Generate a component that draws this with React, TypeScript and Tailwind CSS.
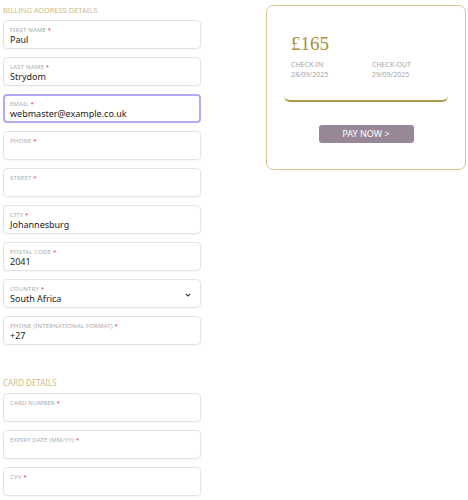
import React from "react";

type FieldProps = {
  label: string;
  value?: string;
  focused?: boolean;
  select?: boolean;
};

const Field: React.FC<FieldProps> = ({ label, value, focused, select }) => {
  return (
    <div
      className={
        focused
          ? "relative h-[29px] rounded-[4px] border-2 border-[#b8a6f7] bg-white px-[5px] pt-[4px]"
          : "relative h-[29px] rounded-[4px] border border-[#e4e4e4] bg-white px-[6px] pt-[5px] shadow-[0_1px_2px_rgba(0,0,0,0.04)]"
      }
    >
      <div className="text-[6px] leading-[8px] uppercase tracking-[0.03em] text-[#aaaaaa]">
        {label} <span className="text-[#e0245e]">*</span>
      </div>
      {value && <div className="text-[9px] leading-[12px] text-[#222]">{value}</div>}
      {select && (
        <svg className="absolute right-[9px] top-[13px]" width="6" height="4" viewBox="0 0 6 4">
          <path d="M0.8 0.8 L3 3 L5.2 0.8" fill="none" stroke="#333" strokeWidth="1.1" />
        </svg>
      )}
    </div>
  );
};

const App: React.FC = () => {
  return (
    <div
      className="flex w-[468px] h-[500px] bg-white overflow-hidden"
      style={{ fontFamily: '"Noto Sans", "Open Sans", sans-serif' }}
    >
      <div className="w-[198px] ml-[3px] flex flex-col">
        <h3 className="mt-[6px] text-[7.5px] leading-[9px] uppercase text-[#cdbb85]">Billing address details</h3>
        <div className="mt-[5px] flex flex-col gap-[8px]">
          <Field label="First name" value="Paul" />
          <Field label="Last name" value="Strydom" />
          <Field label="Email" value="webmaster@example.co.uk" focused />
          <Field label="Phone" />
          <Field label="Street" />
          <Field label="City" value="Johannesburg" />
          <Field label="Postal code" value="2041" />
          <Field label="Country" value="South Africa" select />
          <Field label="Phone (international format)" value="+27" />
        </div>
        <h3 className="mt-[33px] text-[8px] leading-[10px] uppercase text-[#cdbb85]">Card details</h3>
        <div className="mt-[5px] flex flex-col gap-[8px]">
          <Field label="Card number" />
          <Field label="Expiry date (MM/YY)" />
          <Field label="CVV" />
        </div>
      </div>
      <div className="ml-[65px] mt-[5px] w-[200px] h-[165px] rounded-[7px] border border-[#d6c78f] px-[17px] pt-[27px]">
        <div className="rounded-b-[6px] border-b-2 border-[#ab9a45] pb-[20px] px-[7px]">
          <div
            className="text-[19px] leading-[22px] text-[#a8913a]"
            style={{ fontFamily: '"Liberation Serif", serif' }}
          >
            £165
          </div>
          <div className="mt-[5px] grid grid-cols-2 text-[7px] leading-[10px] text-[#a5a5a5]">
            <div>
              <div className="uppercase">Check-in</div>
              <div>28/09/2025</div>
            </div>
            <div className="pl-[6px]">
              <div className="uppercase">Check-out</div>
              <div>29/09/2025</div>
            </div>
          </div>
        </div>
        <div className="mt-[23px] flex justify-center">
          <button className="w-[95px] h-[18px] rounded-[3px] bg-[#978797] text-[9px] leading-[18px] text-white uppercase">
            Pay now &gt;
          </button>
        </div>
      </div>
    </div>
  );
};

export default App;
